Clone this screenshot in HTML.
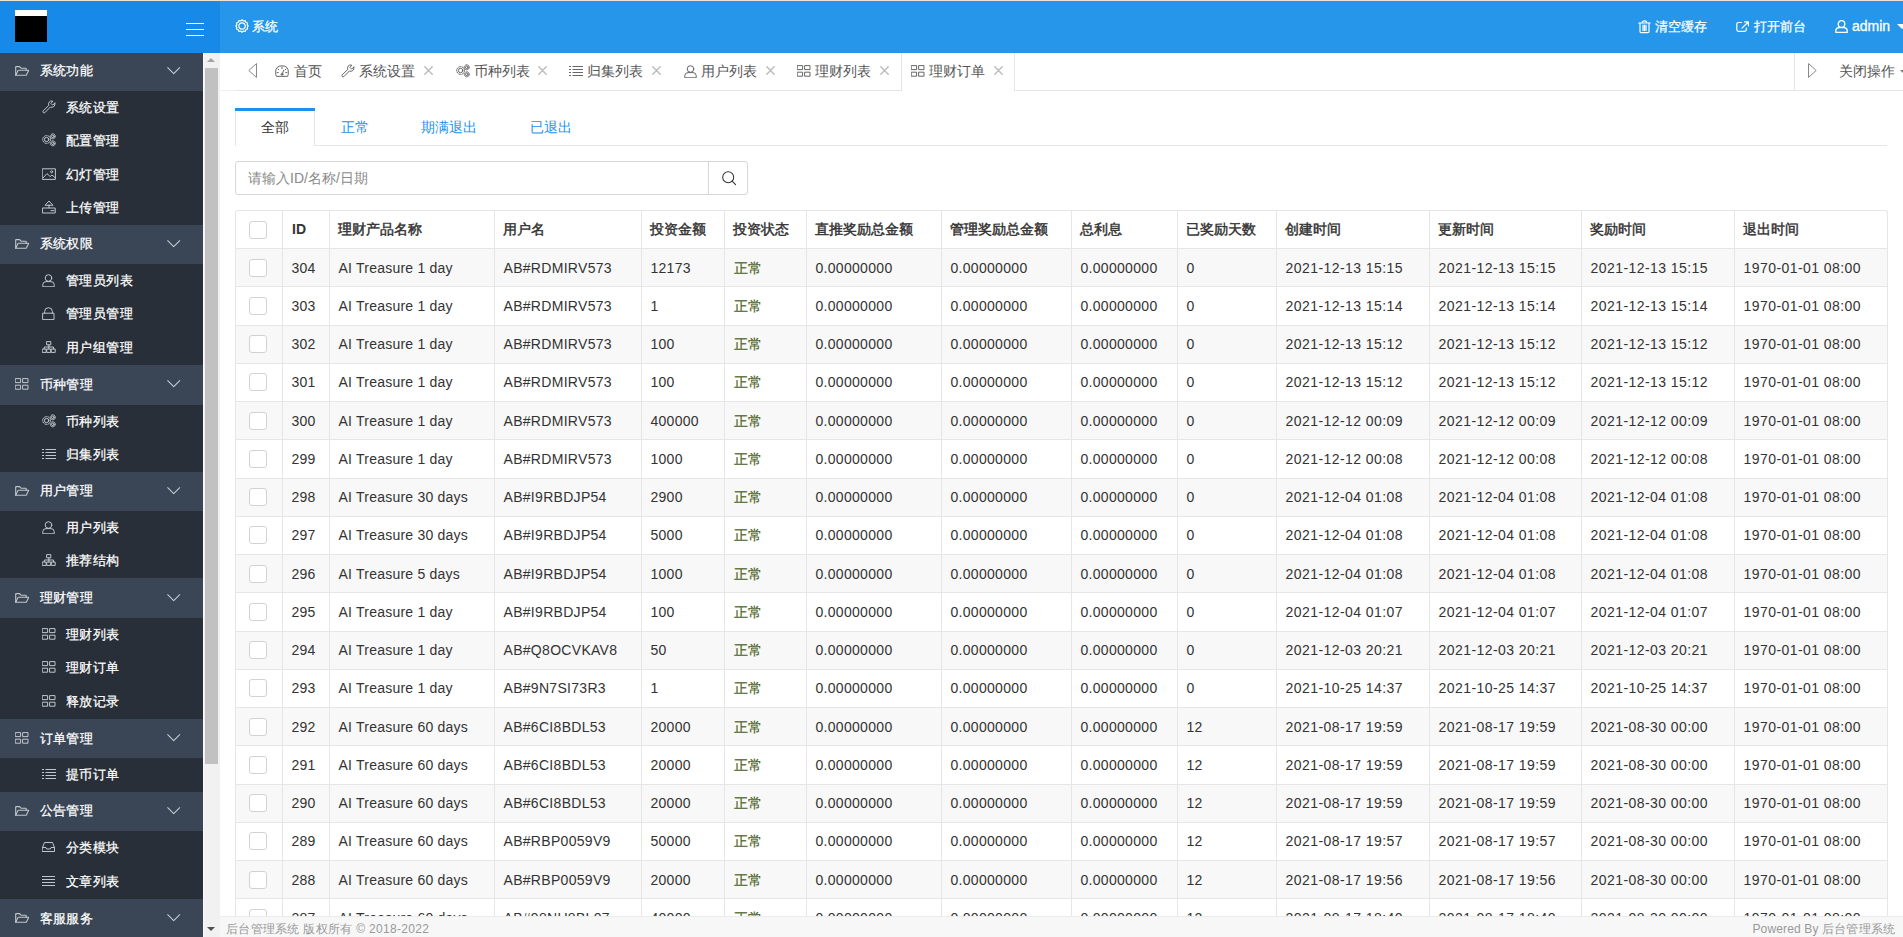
<!DOCTYPE html>
<html><head><meta charset="utf-8"><title>admin</title>
<style>
html,body{margin:0;padding:0;width:1903px;height:937px;overflow:hidden;background:#fff;font-family:"Liberation Sans", sans-serif;}
div{box-sizing:content-box}
</style></head><body>
<div style="position:relative;width:1903px;height:937px;overflow:hidden">
<div style="position:absolute;left:0px;top:0px;width:1903px;height:937px;background:#fff;"></div><div style="position:absolute;left:0px;top:0px;width:1903px;height:53px;background:#2596e9;"></div><div style="position:absolute;left:0px;top:0px;width:220px;height:53px;background:#178ae9;"></div><div style="position:absolute;left:0px;top:0px;width:1903px;height:1px;background:#ece2d8;"></div><div style="position:absolute;left:15px;top:10px;width:32px;height:32px;background:#000;"></div><div style="position:absolute;left:15px;top:10px;width:32px;height:6px;background:#fff;"></div><div style="position:absolute;left:186px;top:23px;width:18px;height:1.4px;background:#fff;"></div><div style="position:absolute;left:186px;top:29px;width:18px;height:1.4px;background:#fff;"></div><div style="position:absolute;left:186px;top:35px;width:18px;height:1.4px;background:#fff;"></div><svg style="position:absolute;left:235px;top:19px" width="14" height="14" viewBox="0 0 14 14" fill="none" stroke="#fff" stroke-width="1.2" stroke-linecap="round" stroke-linejoin="round" ><circle cx="7" cy="7" r="3.2"/><path d="M7 0.8 L8.4 2 L10.2 1.6 L10.8 3.3 L12.5 4 L12.2 5.8 L13.2 7 L12.2 8.3 L12.5 10 L10.8 10.7 L10.2 12.4 L8.4 12 L7 13.2 L5.6 12 L3.8 12.4 L3.2 10.7 L1.5 10 L1.8 8.3 L0.8 7 L1.8 5.8 L1.5 4 L3.2 3.3 L3.8 1.6 L5.6 2 Z"/></svg><div style="position:absolute;left:252px;top:18.5px;font-size:13px;line-height:15px;color:#fff;font-weight:normal;white-space:nowrap;-webkit-text-stroke:0.25px #fff">系统</div><svg style="position:absolute;left:1637.5px;top:20px" width="13" height="14" viewBox="0 0 13 14" fill="none" stroke="#fff" stroke-width="1.2" stroke-linecap="round" stroke-linejoin="round" ><path d="M0.8 3 H12.2 M4.2 3 Q4.2 0.8 6.5 0.8 Q8.8 0.8 8.8 3"/><path d="M2 3 V11.6 Q2 12.7 3.1 12.7 H9.9 Q11 12.7 11 11.6 V3"/><path d="M5 5.2 V10.6 M6.5 5.2 V10.6 M8 5.2 V10.6"/></svg><div style="position:absolute;left:1655px;top:18.5px;font-size:13px;line-height:15px;color:#fff;font-weight:normal;white-space:nowrap;-webkit-text-stroke:0.25px #fff">清空缓存</div><svg style="position:absolute;left:1736px;top:21px" width="14" height="12" viewBox="0 0 14 12" fill="none" stroke="#fff" stroke-width="1.2" stroke-linecap="round" stroke-linejoin="round" ><path d="M5.5 1.5 H2.5 Q0.8 1.5 0.8 3.2 V8.6 Q0.8 10.3 2.5 10.3 H8.6 Q10.3 10.3 10.3 8.6 V7"/><path d="M8.5 0.8 H12.4 V4.7 M12.2 1 L6 7.2"/></svg><div style="position:absolute;left:1754px;top:18.5px;font-size:13px;line-height:15px;color:#fff;font-weight:normal;white-space:nowrap;-webkit-text-stroke:0.25px #fff">打开前台</div><svg style="position:absolute;left:1835px;top:20px" width="13" height="13" viewBox="0 0 13 13" fill="none" stroke="#fff" stroke-width="1.3" stroke-linecap="round" stroke-linejoin="round" ><circle cx="6.5" cy="4" r="3.3"/><path d="M0.8 12.4 V10.6 Q0.8 7.8 4 7.6 H9 Q12.2 7.8 12.2 10.6 V12.4 Z"/></svg><div style="position:absolute;left:1852px;top:18px;font-size:14px;line-height:16px;color:#fff;font-weight:normal;white-space:nowrap;-webkit-text-stroke:0.3px #fff">admin</div><div style="position:absolute;left:1897px;top:24px;width:0;height:0;border-left:5px solid transparent;border-right:5px solid transparent;border-top:5px solid #fff"></div><div style="position:absolute;left:0px;top:53px;width:203px;height:884px;background:#282f38;"></div><div style="position:absolute;left:0px;top:53px;width:203px;height:38px;background:#3a4555;"></div><svg style="position:absolute;left:15px;top:65.5px" width="15" height="11" viewBox="0 0 15 11" fill="none" stroke="#c2c6cc" stroke-width="1.1" stroke-linecap="round" stroke-linejoin="round" ><path d="M0.7 9.3 V1.2 Q0.7 0.6 1.3 0.6 H4.6 L6 2.2 H10.6 Q11.2 2.2 11.2 2.8 V4.2"/><path d="M0.7 9.3 L3 4.6 Q3.2 4.2 3.7 4.2 H13.2 Q13.8 4.2 13.5 4.8 L11.4 9 Q11.2 9.3 10.8 9.3 Z"/></svg><div style="position:absolute;left:39.5px;top:63px;font-size:13px;line-height:15px;color:#fff;font-weight:normal;white-space:nowrap;letter-spacing:0.35px;-webkit-text-stroke:0.25px #fff">系统功能</div><svg style="position:absolute;left:167px;top:66.5px" width="14" height="8" viewBox="0 0 14 8" fill="none" stroke="#c8ccd2" stroke-width="1.05" stroke-linecap="round" stroke-linejoin="round" ><path d="M0.7 0.7 L6.7 6.7 L12.7 0.7"/></svg><svg style="position:absolute;left:42px;top:100px" width="14" height="14" viewBox="0 0 14 14" fill="none" stroke="#c2c6cc" stroke-width="1.0" stroke-linecap="round" stroke-linejoin="round" ><path d="M12.9 3.2 L10.6 5.1 L8.9 3.4 L10.9 1.2 Q8.3 0.3 7 2.3 Q6.1 3.8 6.8 5.4 L1.2 10.9 Q0.5 11.8 1.3 12.6 Q2.1 13.3 2.9 12.6 L8.4 7 Q10.2 7.7 11.7 6.7 Q13.5 5.3 12.9 3.2 Z"/></svg><div style="position:absolute;left:66px;top:99.55px;font-size:13px;line-height:15px;color:#fff;font-weight:normal;white-space:nowrap;letter-spacing:0.4px;-webkit-text-stroke:0.25px #fff">系统设置</div><svg style="position:absolute;left:42px;top:133px" width="14" height="14" viewBox="0 0 14 14" fill="none" stroke="#c2c6cc" stroke-width="1.0" stroke-linecap="round" stroke-linejoin="round" ><circle cx="4.6" cy="6.5" r="2.2"/><circle cx="4.6" cy="6.5" r="3.9" stroke-dasharray="1.6 1.2"/><circle cx="10.8" cy="3.3" r="1.3"/><circle cx="10.8" cy="3.3" r="2.5" stroke-dasharray="1.2 1"/><circle cx="10.8" cy="10.3" r="1.3"/><circle cx="10.8" cy="10.3" r="2.5" stroke-dasharray="1.2 1"/></svg><div style="position:absolute;left:66px;top:133.05px;font-size:13px;line-height:15px;color:#fff;font-weight:normal;white-space:nowrap;letter-spacing:0.4px;-webkit-text-stroke:0.25px #fff">配置管理</div><svg style="position:absolute;left:42px;top:168px" width="14" height="12" viewBox="0 0 14 12" fill="none" stroke="#c2c6cc" stroke-width="1.0" stroke-linecap="round" stroke-linejoin="round" ><rect x="0.6" y="0.8" width="12.8" height="10.6"/><path d="M1.2 9.8 L5 5.6 L8.2 8.6 L10 7 L13 9.6"/><circle cx="9.6" cy="3.8" r="1"/></svg><div style="position:absolute;left:66px;top:166.55px;font-size:13px;line-height:15px;color:#fff;font-weight:normal;white-space:nowrap;letter-spacing:0.4px;-webkit-text-stroke:0.25px #fff">幻灯管理</div><svg style="position:absolute;left:42px;top:200px" width="14" height="14" viewBox="0 0 14 14" fill="none" stroke="#c2c6cc" stroke-width="1.0" stroke-linecap="round" stroke-linejoin="round" ><path d="M3.3 5 L7 1 L10.7 5 Z"/><path d="M7 5 V8"/><path d="M0.8 8 H13.2 V13 H0.8 Z"/><path d="M9 10.6 H12"/></svg><div style="position:absolute;left:66px;top:200.05px;font-size:13px;line-height:15px;color:#fff;font-weight:normal;white-space:nowrap;letter-spacing:0.4px;-webkit-text-stroke:0.25px #fff">上传管理</div><div style="position:absolute;left:0px;top:225px;width:203px;height:39px;background:#3a4555;"></div><svg style="position:absolute;left:15px;top:238.5px" width="15" height="11" viewBox="0 0 15 11" fill="none" stroke="#c2c6cc" stroke-width="1.1" stroke-linecap="round" stroke-linejoin="round" ><path d="M0.7 9.3 V1.2 Q0.7 0.6 1.3 0.6 H4.6 L6 2.2 H10.6 Q11.2 2.2 11.2 2.8 V4.2"/><path d="M0.7 9.3 L3 4.6 Q3.2 4.2 3.7 4.2 H13.2 Q13.8 4.2 13.5 4.8 L11.4 9 Q11.2 9.3 10.8 9.3 Z"/></svg><div style="position:absolute;left:39.5px;top:236px;font-size:13px;line-height:15px;color:#fff;font-weight:normal;white-space:nowrap;letter-spacing:0.35px;-webkit-text-stroke:0.25px #fff">系统权限</div><svg style="position:absolute;left:167px;top:239.5px" width="14" height="8" viewBox="0 0 14 8" fill="none" stroke="#c8ccd2" stroke-width="1.05" stroke-linecap="round" stroke-linejoin="round" ><path d="M0.7 0.7 L6.7 6.7 L12.7 0.7"/></svg><svg style="position:absolute;left:42px;top:273.5px" width="13" height="13" viewBox="0 0 13 13" fill="none" stroke="#c2c6cc" stroke-width="1.0" stroke-linecap="round" stroke-linejoin="round" ><circle cx="6.5" cy="4" r="3.3"/><path d="M0.8 12.4 V10.6 Q0.8 7.8 4 7.6 H9 Q12.2 7.8 12.2 10.6 V12.4 Z"/></svg><div style="position:absolute;left:66px;top:272.6333333333333px;font-size:13px;line-height:15px;color:#fff;font-weight:normal;white-space:nowrap;letter-spacing:0.4px;-webkit-text-stroke:0.25px #fff">管理员列表</div><svg style="position:absolute;left:42px;top:306.5px" width="13" height="13" viewBox="0 0 13 13" fill="none" stroke="#c2c6cc" stroke-width="1.0" stroke-linecap="round" stroke-linejoin="round" ><path d="M2.6 6.2 V4.6 Q2.6 0.7 6.5 0.7 Q10.4 0.7 10.4 4.6 V6.2"/><rect x="1" y="6.2" width="11" height="6.4"/></svg><div style="position:absolute;left:66px;top:306.3px;font-size:13px;line-height:15px;color:#fff;font-weight:normal;white-space:nowrap;letter-spacing:0.4px;-webkit-text-stroke:0.25px #fff">管理员管理</div><svg style="position:absolute;left:42px;top:341px" width="14" height="12" viewBox="0 0 14 12" fill="none" stroke="#c2c6cc" stroke-width="1.0" stroke-linecap="round" stroke-linejoin="round" ><rect x="5" y="0.6" width="3.8" height="3.2"/><path d="M6.9 3.8 V6 M2.3 8 V6 H11.5 V8 M6.9 6 V8"/><rect x="0.6" y="8" width="3.6" height="3.4"/><rect x="5.1" y="8" width="3.6" height="3.4"/><rect x="9.6" y="8" width="3.6" height="3.4"/></svg><div style="position:absolute;left:66px;top:339.96666666666664px;font-size:13px;line-height:15px;color:#fff;font-weight:normal;white-space:nowrap;letter-spacing:0.4px;-webkit-text-stroke:0.25px #fff">用户组管理</div><div style="position:absolute;left:0px;top:365px;width:203px;height:40px;background:#3a4555;"></div><svg style="position:absolute;left:15px;top:378px" width="14" height="12" viewBox="0 0 14 12" fill="none" stroke="#c2c6cc" stroke-width="1.0" stroke-linecap="round" stroke-linejoin="round" ><rect x="0.6" y="0.6" width="5" height="4"/><rect x="8" y="0.6" width="5" height="4"/><rect x="0.6" y="7.2" width="5" height="4"/><rect x="8" y="7.2" width="5" height="4"/></svg><div style="position:absolute;left:39.5px;top:376.5px;font-size:13px;line-height:15px;color:#fff;font-weight:normal;white-space:nowrap;letter-spacing:0.35px;-webkit-text-stroke:0.25px #fff">币种管理</div><svg style="position:absolute;left:167px;top:379.5px" width="14" height="8" viewBox="0 0 14 8" fill="none" stroke="#c8ccd2" stroke-width="1.05" stroke-linecap="round" stroke-linejoin="round" ><path d="M0.7 0.7 L6.7 6.7 L12.7 0.7"/></svg><svg style="position:absolute;left:42px;top:414px" width="14" height="14" viewBox="0 0 14 14" fill="none" stroke="#c2c6cc" stroke-width="1.0" stroke-linecap="round" stroke-linejoin="round" ><circle cx="4.6" cy="6.5" r="2.2"/><circle cx="4.6" cy="6.5" r="3.9" stroke-dasharray="1.6 1.2"/><circle cx="10.8" cy="3.3" r="1.3"/><circle cx="10.8" cy="3.3" r="2.5" stroke-dasharray="1.2 1"/><circle cx="10.8" cy="10.3" r="1.3"/><circle cx="10.8" cy="10.3" r="2.5" stroke-dasharray="1.2 1"/></svg><div style="position:absolute;left:66px;top:413.55px;font-size:13px;line-height:15px;color:#fff;font-weight:normal;white-space:nowrap;letter-spacing:0.4px;-webkit-text-stroke:0.25px #fff">币种列表</div><svg style="position:absolute;left:42px;top:449px" width="14" height="10" viewBox="0 0 14 10" fill="none" stroke="#c2c6cc" stroke-width="1.0" stroke-linejoin="round" stroke-linecap="butt"><path d="M0 0.5 H2 M0 3.5 H2 M0 6.5 H2 M0 9.5 H2 M3.5 0.5 H14 M3.5 3.5 H14 M3.5 6.5 H14 M3.5 9.5 H14"/></svg><div style="position:absolute;left:66px;top:447.05px;font-size:13px;line-height:15px;color:#fff;font-weight:normal;white-space:nowrap;letter-spacing:0.4px;-webkit-text-stroke:0.25px #fff">归集列表</div><div style="position:absolute;left:0px;top:472px;width:203px;height:39px;background:#3a4555;"></div><svg style="position:absolute;left:15px;top:485.5px" width="15" height="11" viewBox="0 0 15 11" fill="none" stroke="#c2c6cc" stroke-width="1.1" stroke-linecap="round" stroke-linejoin="round" ><path d="M0.7 9.3 V1.2 Q0.7 0.6 1.3 0.6 H4.6 L6 2.2 H10.6 Q11.2 2.2 11.2 2.8 V4.2"/><path d="M0.7 9.3 L3 4.6 Q3.2 4.2 3.7 4.2 H13.2 Q13.8 4.2 13.5 4.8 L11.4 9 Q11.2 9.3 10.8 9.3 Z"/></svg><div style="position:absolute;left:39.5px;top:483px;font-size:13px;line-height:15px;color:#fff;font-weight:normal;white-space:nowrap;letter-spacing:0.35px;-webkit-text-stroke:0.25px #fff">用户管理</div><svg style="position:absolute;left:167px;top:486.5px" width="14" height="8" viewBox="0 0 14 8" fill="none" stroke="#c8ccd2" stroke-width="1.05" stroke-linecap="round" stroke-linejoin="round" ><path d="M0.7 0.7 L6.7 6.7 L12.7 0.7"/></svg><svg style="position:absolute;left:42px;top:520.5px" width="13" height="13" viewBox="0 0 13 13" fill="none" stroke="#c2c6cc" stroke-width="1.0" stroke-linecap="round" stroke-linejoin="round" ><circle cx="6.5" cy="4" r="3.3"/><path d="M0.8 12.4 V10.6 Q0.8 7.8 4 7.6 H9 Q12.2 7.8 12.2 10.6 V12.4 Z"/></svg><div style="position:absolute;left:66px;top:519.55px;font-size:13px;line-height:15px;color:#fff;font-weight:normal;white-space:nowrap;letter-spacing:0.4px;-webkit-text-stroke:0.25px #fff">用户列表</div><svg style="position:absolute;left:42px;top:554px" width="14" height="12" viewBox="0 0 14 12" fill="none" stroke="#c2c6cc" stroke-width="1.0" stroke-linecap="round" stroke-linejoin="round" ><rect x="5" y="0.6" width="3.8" height="3.2"/><path d="M6.9 3.8 V6 M2.3 8 V6 H11.5 V8 M6.9 6 V8"/><rect x="0.6" y="8" width="3.6" height="3.4"/><rect x="5.1" y="8" width="3.6" height="3.4"/><rect x="9.6" y="8" width="3.6" height="3.4"/></svg><div style="position:absolute;left:66px;top:553.05px;font-size:13px;line-height:15px;color:#fff;font-weight:normal;white-space:nowrap;letter-spacing:0.4px;-webkit-text-stroke:0.25px #fff">推荐结构</div><div style="position:absolute;left:0px;top:578px;width:203px;height:40px;background:#3a4555;"></div><svg style="position:absolute;left:15px;top:592.5px" width="15" height="11" viewBox="0 0 15 11" fill="none" stroke="#c2c6cc" stroke-width="1.1" stroke-linecap="round" stroke-linejoin="round" ><path d="M0.7 9.3 V1.2 Q0.7 0.6 1.3 0.6 H4.6 L6 2.2 H10.6 Q11.2 2.2 11.2 2.8 V4.2"/><path d="M0.7 9.3 L3 4.6 Q3.2 4.2 3.7 4.2 H13.2 Q13.8 4.2 13.5 4.8 L11.4 9 Q11.2 9.3 10.8 9.3 Z"/></svg><div style="position:absolute;left:39.5px;top:589.5px;font-size:13px;line-height:15px;color:#fff;font-weight:normal;white-space:nowrap;letter-spacing:0.35px;-webkit-text-stroke:0.25px #fff">理财管理</div><svg style="position:absolute;left:167px;top:593.5px" width="14" height="8" viewBox="0 0 14 8" fill="none" stroke="#c8ccd2" stroke-width="1.05" stroke-linecap="round" stroke-linejoin="round" ><path d="M0.7 0.7 L6.7 6.7 L12.7 0.7"/></svg><svg style="position:absolute;left:42px;top:628px" width="14" height="12" viewBox="0 0 14 12" fill="none" stroke="#c2c6cc" stroke-width="1.0" stroke-linecap="round" stroke-linejoin="round" ><rect x="0.6" y="0.6" width="5" height="4"/><rect x="8" y="0.6" width="5" height="4"/><rect x="0.6" y="7.2" width="5" height="4"/><rect x="8" y="7.2" width="5" height="4"/></svg><div style="position:absolute;left:66px;top:626.6333333333333px;font-size:13px;line-height:15px;color:#fff;font-weight:normal;white-space:nowrap;letter-spacing:0.4px;-webkit-text-stroke:0.25px #fff">理财列表</div><svg style="position:absolute;left:42px;top:661px" width="14" height="12" viewBox="0 0 14 12" fill="none" stroke="#c2c6cc" stroke-width="1.0" stroke-linecap="round" stroke-linejoin="round" ><rect x="0.6" y="0.6" width="5" height="4"/><rect x="8" y="0.6" width="5" height="4"/><rect x="0.6" y="7.2" width="5" height="4"/><rect x="8" y="7.2" width="5" height="4"/></svg><div style="position:absolute;left:66px;top:660.3px;font-size:13px;line-height:15px;color:#fff;font-weight:normal;white-space:nowrap;letter-spacing:0.4px;-webkit-text-stroke:0.25px #fff">理财订单</div><svg style="position:absolute;left:42px;top:695px" width="14" height="12" viewBox="0 0 14 12" fill="none" stroke="#c2c6cc" stroke-width="1.0" stroke-linecap="round" stroke-linejoin="round" ><rect x="0.6" y="0.6" width="5" height="4"/><rect x="8" y="0.6" width="5" height="4"/><rect x="0.6" y="7.2" width="5" height="4"/><rect x="8" y="7.2" width="5" height="4"/></svg><div style="position:absolute;left:66px;top:693.9666666666667px;font-size:13px;line-height:15px;color:#fff;font-weight:normal;white-space:nowrap;letter-spacing:0.4px;-webkit-text-stroke:0.25px #fff">释放记录</div><div style="position:absolute;left:0px;top:719px;width:203px;height:39px;background:#3a4555;"></div><svg style="position:absolute;left:15px;top:732px" width="14" height="12" viewBox="0 0 14 12" fill="none" stroke="#c2c6cc" stroke-width="1.0" stroke-linecap="round" stroke-linejoin="round" ><rect x="0.6" y="0.6" width="5" height="4"/><rect x="8" y="0.6" width="5" height="4"/><rect x="0.6" y="7.2" width="5" height="4"/><rect x="8" y="7.2" width="5" height="4"/></svg><div style="position:absolute;left:39.5px;top:730.5px;font-size:13px;line-height:15px;color:#fff;font-weight:normal;white-space:nowrap;letter-spacing:0.35px;-webkit-text-stroke:0.25px #fff">订单管理</div><svg style="position:absolute;left:167px;top:733.5px" width="14" height="8" viewBox="0 0 14 8" fill="none" stroke="#c8ccd2" stroke-width="1.05" stroke-linecap="round" stroke-linejoin="round" ><path d="M0.7 0.7 L6.7 6.7 L12.7 0.7"/></svg><svg style="position:absolute;left:42px;top:769px" width="14" height="10" viewBox="0 0 14 10" fill="none" stroke="#c2c6cc" stroke-width="1.0" stroke-linejoin="round" stroke-linecap="butt"><path d="M0 0.5 H2 M0 3.5 H2 M0 6.5 H2 M0 9.5 H2 M3.5 0.5 H14 M3.5 3.5 H14 M3.5 6.5 H14 M3.5 9.5 H14"/></svg><div style="position:absolute;left:66px;top:766.8px;font-size:13px;line-height:15px;color:#fff;font-weight:normal;white-space:nowrap;letter-spacing:0.4px;-webkit-text-stroke:0.25px #fff">提币订单</div><div style="position:absolute;left:0px;top:792px;width:203px;height:39px;background:#3a4555;"></div><svg style="position:absolute;left:15px;top:805.5px" width="15" height="11" viewBox="0 0 15 11" fill="none" stroke="#c2c6cc" stroke-width="1.1" stroke-linecap="round" stroke-linejoin="round" ><path d="M0.7 9.3 V1.2 Q0.7 0.6 1.3 0.6 H4.6 L6 2.2 H10.6 Q11.2 2.2 11.2 2.8 V4.2"/><path d="M0.7 9.3 L3 4.6 Q3.2 4.2 3.7 4.2 H13.2 Q13.8 4.2 13.5 4.8 L11.4 9 Q11.2 9.3 10.8 9.3 Z"/></svg><div style="position:absolute;left:39.5px;top:803px;font-size:13px;line-height:15px;color:#fff;font-weight:normal;white-space:nowrap;letter-spacing:0.35px;-webkit-text-stroke:0.25px #fff">公告管理</div><svg style="position:absolute;left:167px;top:806.5px" width="14" height="8" viewBox="0 0 14 8" fill="none" stroke="#c8ccd2" stroke-width="1.05" stroke-linecap="round" stroke-linejoin="round" ><path d="M0.7 0.7 L6.7 6.7 L12.7 0.7"/></svg><svg style="position:absolute;left:42px;top:842px" width="13" height="10" viewBox="0 0 13 10" fill="none" stroke="#c2c6cc" stroke-width="1.0" stroke-linecap="round" stroke-linejoin="round" ><path d="M0.5 5.5 L2.5 0.5 H10.5 L12.5 5.5 V9.5 H0.5 Z"/><path d="M0.5 5.5 H4 L4.6 7 H8.4 L9 5.5 H12.5"/></svg><div style="position:absolute;left:66px;top:839.8px;font-size:13px;line-height:15px;color:#fff;font-weight:normal;white-space:nowrap;letter-spacing:0.4px;-webkit-text-stroke:0.25px #fff">分类模块</div><svg style="position:absolute;left:42px;top:876px" width="13" height="10" viewBox="0 0 13 10" fill="none" stroke="#c2c6cc" stroke-width="1.0" stroke-linecap="round" stroke-linejoin="round" ><path d="M0 0.5 H13 M0 3.5 H13 M0 6.5 H13 M0 9.5 H13"/></svg><div style="position:absolute;left:66px;top:873.8px;font-size:13px;line-height:15px;color:#fff;font-weight:normal;white-space:nowrap;letter-spacing:0.4px;-webkit-text-stroke:0.25px #fff">文章列表</div><div style="position:absolute;left:0px;top:899px;width:203px;height:39.5px;background:#3a4555;"></div><svg style="position:absolute;left:15px;top:912.5px" width="15" height="11" viewBox="0 0 15 11" fill="none" stroke="#c2c6cc" stroke-width="1.1" stroke-linecap="round" stroke-linejoin="round" ><path d="M0.7 9.3 V1.2 Q0.7 0.6 1.3 0.6 H4.6 L6 2.2 H10.6 Q11.2 2.2 11.2 2.8 V4.2"/><path d="M0.7 9.3 L3 4.6 Q3.2 4.2 3.7 4.2 H13.2 Q13.8 4.2 13.5 4.8 L11.4 9 Q11.2 9.3 10.8 9.3 Z"/></svg><div style="position:absolute;left:39.5px;top:910.5px;font-size:13px;line-height:15px;color:#fff;font-weight:normal;white-space:nowrap;letter-spacing:0.35px;-webkit-text-stroke:0.25px #fff">客服服务</div><svg style="position:absolute;left:167px;top:913.5px" width="14" height="8" viewBox="0 0 14 8" fill="none" stroke="#c8ccd2" stroke-width="1.05" stroke-linecap="round" stroke-linejoin="round" ><path d="M0.7 0.7 L6.7 6.7 L12.7 0.7"/></svg><div style="position:absolute;left:203px;top:53px;width:17px;height:884px;background:#f1f1f1;"></div><div style="position:absolute;left:203px;top:53px;width:1px;height:884px;background:#fafafa;"></div><div style="position:absolute;left:205px;top:68px;width:13px;height:696px;background:#c1c1c1;"></div><div style="position:absolute;left:207px;top:58px;width:0;height:0;border-left:4px solid transparent;border-right:4px solid transparent;border-bottom:4px solid #a3a3a3"></div><div style="position:absolute;left:207px;top:927px;width:0;height:0;border-left:4px solid transparent;border-right:4px solid transparent;border-top:4px solid #505050"></div><div style="position:absolute;left:220px;top:90px;width:1683px;height:1px;background:#e6e6e6;"></div><div style="position:absolute;left:220px;top:90px;width:15px;height:1px;background:#f0f0f0;"></div><svg style="position:absolute;left:247.5px;top:63px" width="9" height="15" viewBox="0 0 9 15" fill="none" stroke="#888" stroke-width="1.0" stroke-linecap="round" stroke-linejoin="round" ><path d="M8.2 0.8 L0.8 7.5 L8.2 14.2 Z"/></svg><div style="position:absolute;left:901px;top:53px;width:114px;height:38px;background:#fff;box-sizing:border-box;border-left:1px solid #e6e6e6;border-right:1px solid #e6e6e6"></div><svg style="position:absolute;left:275px;top:65px" width="14" height="12" viewBox="0 0 14 12" fill="none" stroke="#666" stroke-width="1.0" stroke-linecap="round" stroke-linejoin="round" ><path d="M1.2 11 Q0.6 9.5 0.6 7.3 Q0.6 0.8 7 0.8 Q13.4 0.8 13.4 7.3 Q13.4 9.5 12.8 11 Z"/><path d="M7 2.2 V3.6 M3 4 L3.8 4.8 M11 4 L10.2 4.8 M2 7.6 H3.3 M10.7 7.6 H12 M7 9.6 L8.8 5.2"/><circle cx="7" cy="9.3" r="1"/></svg><div style="position:absolute;left:294px;top:63px;font-size:14px;line-height:16px;color:#555;font-weight:normal;white-space:nowrap;">首页</div><svg style="position:absolute;left:341px;top:64px" width="14" height="14" viewBox="0 0 14 14" fill="none" stroke="#666" stroke-width="1.0" stroke-linecap="round" stroke-linejoin="round" ><path d="M12.9 3.2 L10.6 5.1 L8.9 3.4 L10.9 1.2 Q8.3 0.3 7 2.3 Q6.1 3.8 6.8 5.4 L1.2 10.9 Q0.5 11.8 1.3 12.6 Q2.1 13.3 2.9 12.6 L8.4 7 Q10.2 7.7 11.7 6.7 Q13.5 5.3 12.9 3.2 Z"/></svg><div style="position:absolute;left:359px;top:63px;font-size:14px;line-height:16px;color:#555;font-weight:normal;white-space:nowrap;">系统设置</div><svg style="position:absolute;left:424px;top:66px" width="9" height="9" viewBox="0 0 9 9" fill="none" stroke="#bdbdbd" stroke-width="1.5" stroke-linecap="round" stroke-linejoin="round" ><path d="M0.8 0.8 L8.2 8.2 M8.2 0.8 L0.8 8.2"/></svg><svg style="position:absolute;left:456px;top:64px" width="14" height="14" viewBox="0 0 14 14" fill="none" stroke="#666" stroke-width="1.0" stroke-linecap="round" stroke-linejoin="round" ><circle cx="4.6" cy="6.5" r="2.2"/><circle cx="4.6" cy="6.5" r="3.9" stroke-dasharray="1.6 1.2"/><circle cx="10.8" cy="3.3" r="1.3"/><circle cx="10.8" cy="3.3" r="2.5" stroke-dasharray="1.2 1"/><circle cx="10.8" cy="10.3" r="1.3"/><circle cx="10.8" cy="10.3" r="2.5" stroke-dasharray="1.2 1"/></svg><div style="position:absolute;left:474px;top:63px;font-size:14px;line-height:16px;color:#555;font-weight:normal;white-space:nowrap;">币种列表</div><svg style="position:absolute;left:538px;top:66px" width="9" height="9" viewBox="0 0 9 9" fill="none" stroke="#bdbdbd" stroke-width="1.5" stroke-linecap="round" stroke-linejoin="round" ><path d="M0.8 0.8 L8.2 8.2 M8.2 0.8 L0.8 8.2"/></svg><svg style="position:absolute;left:569px;top:66px" width="14" height="10" viewBox="0 0 14 10" fill="none" stroke="#666" stroke-width="1.0" stroke-linejoin="round" stroke-linecap="butt"><path d="M0 0.5 H2 M0 3.5 H2 M0 6.5 H2 M0 9.5 H2 M3.5 0.5 H14 M3.5 3.5 H14 M3.5 6.5 H14 M3.5 9.5 H14"/></svg><div style="position:absolute;left:587px;top:63px;font-size:14px;line-height:16px;color:#555;font-weight:normal;white-space:nowrap;">归集列表</div><svg style="position:absolute;left:652px;top:66px" width="9" height="9" viewBox="0 0 9 9" fill="none" stroke="#bdbdbd" stroke-width="1.5" stroke-linecap="round" stroke-linejoin="round" ><path d="M0.8 0.8 L8.2 8.2 M8.2 0.8 L0.8 8.2"/></svg><svg style="position:absolute;left:684px;top:64.5px" width="13" height="13" viewBox="0 0 13 13" fill="none" stroke="#666" stroke-width="1.0" stroke-linecap="round" stroke-linejoin="round" ><circle cx="6.5" cy="4" r="3.3"/><path d="M0.8 12.4 V10.6 Q0.8 7.8 4 7.6 H9 Q12.2 7.8 12.2 10.6 V12.4 Z"/></svg><div style="position:absolute;left:701px;top:63px;font-size:14px;line-height:16px;color:#555;font-weight:normal;white-space:nowrap;">用户列表</div><svg style="position:absolute;left:766px;top:66px" width="9" height="9" viewBox="0 0 9 9" fill="none" stroke="#bdbdbd" stroke-width="1.5" stroke-linecap="round" stroke-linejoin="round" ><path d="M0.8 0.8 L8.2 8.2 M8.2 0.8 L0.8 8.2"/></svg><svg style="position:absolute;left:797px;top:65px" width="14" height="12" viewBox="0 0 14 12" fill="none" stroke="#666" stroke-width="1.0" stroke-linecap="round" stroke-linejoin="round" ><rect x="0.6" y="0.6" width="5" height="4"/><rect x="8" y="0.6" width="5" height="4"/><rect x="0.6" y="7.2" width="5" height="4"/><rect x="8" y="7.2" width="5" height="4"/></svg><div style="position:absolute;left:815px;top:63px;font-size:14px;line-height:16px;color:#555;font-weight:normal;white-space:nowrap;">理财列表</div><svg style="position:absolute;left:880px;top:66px" width="9" height="9" viewBox="0 0 9 9" fill="none" stroke="#bdbdbd" stroke-width="1.5" stroke-linecap="round" stroke-linejoin="round" ><path d="M0.8 0.8 L8.2 8.2 M8.2 0.8 L0.8 8.2"/></svg><svg style="position:absolute;left:911px;top:65px" width="14" height="12" viewBox="0 0 14 12" fill="none" stroke="#666" stroke-width="1.0" stroke-linecap="round" stroke-linejoin="round" ><rect x="0.6" y="0.6" width="5" height="4"/><rect x="8" y="0.6" width="5" height="4"/><rect x="0.6" y="7.2" width="5" height="4"/><rect x="8" y="7.2" width="5" height="4"/></svg><div style="position:absolute;left:929px;top:63px;font-size:14px;line-height:16px;color:#555;font-weight:normal;white-space:nowrap;">理财订单</div><svg style="position:absolute;left:994px;top:66px" width="9" height="9" viewBox="0 0 9 9" fill="none" stroke="#bdbdbd" stroke-width="1.5" stroke-linecap="round" stroke-linejoin="round" ><path d="M0.8 0.8 L8.2 8.2 M8.2 0.8 L0.8 8.2"/></svg><div style="position:absolute;left:1794px;top:53px;width:1px;height:37px;background:#e6e6e6;"></div><svg style="position:absolute;left:1807.5px;top:63px" width="9" height="15" viewBox="0 0 9 15" fill="none" stroke="#888" stroke-width="1.0" stroke-linecap="round" stroke-linejoin="round" ><path d="M0.8 0.8 L8.2 7.5 L0.8 14.2 Z"/></svg><div style="position:absolute;left:1839px;top:63px;font-size:14px;line-height:16px;color:#555;font-weight:normal;white-space:nowrap;">关闭操作</div><div style="position:absolute;left:1900px;top:70px;width:0;height:0;border-left:4px solid transparent;border-right:4px solid transparent;border-top:4px solid #777"></div><div style="position:absolute;left:235px;top:145px;width:1652px;height:1px;background:#e6e6e6;"></div><div style="position:absolute;left:235px;top:108px;width:80px;height:38px;background:#fff;box-sizing:border-box;border-left:1px solid #e6e6e6;border-right:1px solid #e6e6e6"></div><div style="position:absolute;left:235px;top:108px;width:80px;height:3px;background:#1e90ee;"></div><div style="position:absolute;left:261px;top:119px;font-size:14px;line-height:16px;color:#333;font-weight:normal;white-space:nowrap;">全部</div><div style="position:absolute;left:341px;top:119px;font-size:14px;line-height:16px;color:#1e90ee;font-weight:normal;white-space:nowrap;">正常</div><div style="position:absolute;left:421px;top:119px;font-size:14px;line-height:16px;color:#1e90ee;font-weight:normal;white-space:nowrap;">期满退出</div><div style="position:absolute;left:530px;top:119px;font-size:14px;line-height:16px;color:#1e90ee;font-weight:normal;white-space:nowrap;">已退出</div><div style="position:absolute;left:235px;top:161px;width:513px;height:34px;box-sizing:border-box;border:1px solid #d6d6d6;border-radius:3px;background:#fff"></div><div style="position:absolute;left:708px;top:162px;width:1px;height:32px;background:#d6d6d6;"></div><div style="position:absolute;left:248px;top:170px;font-size:14px;line-height:16px;color:#8a8a8a;font-weight:normal;white-space:nowrap;">请输入ID/名称/日期</div><svg style="position:absolute;left:721.5px;top:170.5px" width="15" height="15" viewBox="0 0 15 15" fill="none" stroke="#333" stroke-width="1.05" stroke-linecap="round" stroke-linejoin="round" ><circle cx="6.2" cy="6.2" r="5.5"/><path d="M10.2 10.2 L13.6 13.6"/></svg><div style="position:absolute;left:0;top:0;width:1903px;height:916px;overflow:hidden"><div style="position:absolute;left:235px;top:249px;width:1652px;height:37px;background:#f8f8f8;"></div><div style="position:absolute;left:235px;top:326px;width:1652px;height:37px;background:#f8f8f8;"></div><div style="position:absolute;left:235px;top:402px;width:1652px;height:37px;background:#f8f8f8;"></div><div style="position:absolute;left:235px;top:479px;width:1652px;height:37px;background:#f8f8f8;"></div><div style="position:absolute;left:235px;top:555px;width:1652px;height:37px;background:#f8f8f8;"></div><div style="position:absolute;left:235px;top:632px;width:1652px;height:37px;background:#f8f8f8;"></div><div style="position:absolute;left:235px;top:708px;width:1652px;height:37px;background:#f8f8f8;"></div><div style="position:absolute;left:235px;top:785px;width:1652px;height:37px;background:#f8f8f8;"></div><div style="position:absolute;left:235px;top:861px;width:1652px;height:37px;background:#f8f8f8;"></div><div style="position:absolute;left:238px;top:210px;width:1646px;height:1px;background:#e6e6e6;"></div><div style="position:absolute;left:235px;top:248px;width:1652px;height:1px;background:#e6e6e6;"></div><div style="position:absolute;left:235px;top:286px;width:1652px;height:1px;background:#e6e6e6;"></div><div style="position:absolute;left:235px;top:325px;width:1652px;height:1px;background:#e6e6e6;"></div><div style="position:absolute;left:235px;top:363px;width:1652px;height:1px;background:#e6e6e6;"></div><div style="position:absolute;left:235px;top:401px;width:1652px;height:1px;background:#e6e6e6;"></div><div style="position:absolute;left:235px;top:439px;width:1652px;height:1px;background:#e6e6e6;"></div><div style="position:absolute;left:235px;top:478px;width:1652px;height:1px;background:#e6e6e6;"></div><div style="position:absolute;left:235px;top:516px;width:1652px;height:1px;background:#e6e6e6;"></div><div style="position:absolute;left:235px;top:554px;width:1652px;height:1px;background:#e6e6e6;"></div><div style="position:absolute;left:235px;top:592px;width:1652px;height:1px;background:#e6e6e6;"></div><div style="position:absolute;left:235px;top:631px;width:1652px;height:1px;background:#e6e6e6;"></div><div style="position:absolute;left:235px;top:669px;width:1652px;height:1px;background:#e6e6e6;"></div><div style="position:absolute;left:235px;top:707px;width:1652px;height:1px;background:#e6e6e6;"></div><div style="position:absolute;left:235px;top:745px;width:1652px;height:1px;background:#e6e6e6;"></div><div style="position:absolute;left:235px;top:784px;width:1652px;height:1px;background:#e6e6e6;"></div><div style="position:absolute;left:235px;top:822px;width:1652px;height:1px;background:#e6e6e6;"></div><div style="position:absolute;left:235px;top:860px;width:1652px;height:1px;background:#e6e6e6;"></div><div style="position:absolute;left:235px;top:898px;width:1652px;height:1px;background:#e6e6e6;"></div><div style="position:absolute;left:235px;top:937px;width:1652px;height:1px;background:#e6e6e6;"></div><div style="position:absolute;left:235px;top:215px;width:1px;height:706px;background:#e6e6e6"></div><div style="position:absolute;left:282px;top:211px;width:1px;height:706px;background:#e6e6e6"></div><div style="position:absolute;left:329px;top:211px;width:1px;height:706px;background:#e6e6e6"></div><div style="position:absolute;left:494px;top:211px;width:1px;height:706px;background:#e6e6e6"></div><div style="position:absolute;left:641px;top:211px;width:1px;height:706px;background:#e6e6e6"></div><div style="position:absolute;left:724px;top:211px;width:1px;height:706px;background:#e6e6e6"></div><div style="position:absolute;left:806px;top:211px;width:1px;height:706px;background:#e6e6e6"></div><div style="position:absolute;left:941px;top:211px;width:1px;height:706px;background:#e6e6e6"></div><div style="position:absolute;left:1071px;top:211px;width:1px;height:706px;background:#e6e6e6"></div><div style="position:absolute;left:1177px;top:211px;width:1px;height:706px;background:#e6e6e6"></div><div style="position:absolute;left:1276px;top:211px;width:1px;height:706px;background:#e6e6e6"></div><div style="position:absolute;left:1429px;top:211px;width:1px;height:706px;background:#e6e6e6"></div><div style="position:absolute;left:1581px;top:211px;width:1px;height:706px;background:#e6e6e6"></div><div style="position:absolute;left:1734px;top:211px;width:1px;height:706px;background:#e6e6e6"></div><div style="position:absolute;left:1887px;top:215px;width:1px;height:706px;background:#e6e6e6"></div><div style="position:absolute;left:235px;top:210px;width:1653px;height:10px;box-sizing:border-box;border:1px solid #e6e6e6;border-bottom:none;border-radius:3px 3px 0 0"></div><div style="position:absolute;left:292px;top:221px;font-size:14px;line-height:16px;color:#333;font-weight:bold;white-space:nowrap;">ID</div><div style="position:absolute;left:338.2px;top:221px;font-size:14px;line-height:16px;color:#333;font-weight:normal;white-space:nowrap;-webkit-text-stroke:0.45px #333">理财产品名称</div><div style="position:absolute;left:503.2px;top:221px;font-size:14px;line-height:16px;color:#333;font-weight:normal;white-space:nowrap;-webkit-text-stroke:0.45px #333">用户名</div><div style="position:absolute;left:650.2px;top:221px;font-size:14px;line-height:16px;color:#333;font-weight:normal;white-space:nowrap;-webkit-text-stroke:0.45px #333">投资金额</div><div style="position:absolute;left:733.2px;top:221px;font-size:14px;line-height:16px;color:#333;font-weight:normal;white-space:nowrap;-webkit-text-stroke:0.45px #333">投资状态</div><div style="position:absolute;left:815.2px;top:221px;font-size:14px;line-height:16px;color:#333;font-weight:normal;white-space:nowrap;-webkit-text-stroke:0.45px #333">直推奖励总金额</div><div style="position:absolute;left:950.2px;top:221px;font-size:14px;line-height:16px;color:#333;font-weight:normal;white-space:nowrap;-webkit-text-stroke:0.45px #333">管理奖励总金额</div><div style="position:absolute;left:1080.2px;top:221px;font-size:14px;line-height:16px;color:#333;font-weight:normal;white-space:nowrap;-webkit-text-stroke:0.45px #333">总利息</div><div style="position:absolute;left:1186.2px;top:221px;font-size:14px;line-height:16px;color:#333;font-weight:normal;white-space:nowrap;-webkit-text-stroke:0.45px #333">已奖励天数</div><div style="position:absolute;left:1285.2px;top:221px;font-size:14px;line-height:16px;color:#333;font-weight:normal;white-space:nowrap;-webkit-text-stroke:0.45px #333">创建时间</div><div style="position:absolute;left:1438.2px;top:221px;font-size:14px;line-height:16px;color:#333;font-weight:normal;white-space:nowrap;-webkit-text-stroke:0.45px #333">更新时间</div><div style="position:absolute;left:1590.2px;top:221px;font-size:14px;line-height:16px;color:#333;font-weight:normal;white-space:nowrap;-webkit-text-stroke:0.45px #333">奖励时间</div><div style="position:absolute;left:1743.2px;top:221px;font-size:14px;line-height:16px;color:#333;font-weight:normal;white-space:nowrap;-webkit-text-stroke:0.45px #333">退出时间</div><div style="position:absolute;left:249px;top:221px;width:18px;height:18px;box-sizing:border-box;border:1px solid #d2d2d2;border-radius:3px;background:#fff"></div><div style="position:absolute;left:249px;top:259px;width:18px;height:18px;box-sizing:border-box;border:1px solid #d2d2d2;border-radius:3px;background:#fff"></div><div style="position:absolute;left:291.5px;top:260px;font-size:14px;line-height:16px;color:#333;font-weight:normal;white-space:nowrap;letter-spacing:0.26px">304</div><div style="position:absolute;left:338.5px;top:260px;font-size:14px;line-height:16px;color:#333;font-weight:normal;white-space:nowrap;letter-spacing:0.22px">AI Treasure 1 day</div><div style="position:absolute;left:503.5px;top:260px;font-size:14px;line-height:16px;color:#333;font-weight:normal;white-space:nowrap;letter-spacing:0.3px">AB#RDMIRV573</div><div style="position:absolute;left:650.5px;top:260px;font-size:14px;line-height:16px;color:#333;font-weight:normal;white-space:nowrap;letter-spacing:0.26px">12173</div><div style="position:absolute;left:733.5px;top:260px;font-size:14px;line-height:16px;color:#4e6628;font-weight:normal;white-space:nowrap;letter-spacing:0px;-webkit-text-stroke:0.2px #4e6628">正常</div><div style="position:absolute;left:815.5px;top:260px;font-size:14px;line-height:16px;color:#333;font-weight:normal;white-space:nowrap;letter-spacing:0.3px">0.00000000</div><div style="position:absolute;left:950.5px;top:260px;font-size:14px;line-height:16px;color:#333;font-weight:normal;white-space:nowrap;letter-spacing:0.3px">0.00000000</div><div style="position:absolute;left:1080.5px;top:260px;font-size:14px;line-height:16px;color:#333;font-weight:normal;white-space:nowrap;letter-spacing:0.3px">0.00000000</div><div style="position:absolute;left:1186.5px;top:260px;font-size:14px;line-height:16px;color:#333;font-weight:normal;white-space:nowrap;letter-spacing:0.26px">0</div><div style="position:absolute;left:1285.5px;top:260px;font-size:14px;line-height:16px;color:#333;font-weight:normal;white-space:nowrap;letter-spacing:0.44px">2021-12-13 15:15</div><div style="position:absolute;left:1438.5px;top:260px;font-size:14px;line-height:16px;color:#333;font-weight:normal;white-space:nowrap;letter-spacing:0.44px">2021-12-13 15:15</div><div style="position:absolute;left:1590.5px;top:260px;font-size:14px;line-height:16px;color:#333;font-weight:normal;white-space:nowrap;letter-spacing:0.44px">2021-12-13 15:15</div><div style="position:absolute;left:1743.5px;top:260px;font-size:14px;line-height:16px;color:#333;font-weight:normal;white-space:nowrap;letter-spacing:0.44px">1970-01-01 08:00</div><div style="position:absolute;left:249px;top:297px;width:18px;height:18px;box-sizing:border-box;border:1px solid #d2d2d2;border-radius:3px;background:#fff"></div><div style="position:absolute;left:291.5px;top:298px;font-size:14px;line-height:16px;color:#333;font-weight:normal;white-space:nowrap;letter-spacing:0.26px">303</div><div style="position:absolute;left:338.5px;top:298px;font-size:14px;line-height:16px;color:#333;font-weight:normal;white-space:nowrap;letter-spacing:0.22px">AI Treasure 1 day</div><div style="position:absolute;left:503.5px;top:298px;font-size:14px;line-height:16px;color:#333;font-weight:normal;white-space:nowrap;letter-spacing:0.3px">AB#RDMIRV573</div><div style="position:absolute;left:650.5px;top:298px;font-size:14px;line-height:16px;color:#333;font-weight:normal;white-space:nowrap;letter-spacing:0.26px">1</div><div style="position:absolute;left:733.5px;top:298px;font-size:14px;line-height:16px;color:#4e6628;font-weight:normal;white-space:nowrap;letter-spacing:0px;-webkit-text-stroke:0.2px #4e6628">正常</div><div style="position:absolute;left:815.5px;top:298px;font-size:14px;line-height:16px;color:#333;font-weight:normal;white-space:nowrap;letter-spacing:0.3px">0.00000000</div><div style="position:absolute;left:950.5px;top:298px;font-size:14px;line-height:16px;color:#333;font-weight:normal;white-space:nowrap;letter-spacing:0.3px">0.00000000</div><div style="position:absolute;left:1080.5px;top:298px;font-size:14px;line-height:16px;color:#333;font-weight:normal;white-space:nowrap;letter-spacing:0.3px">0.00000000</div><div style="position:absolute;left:1186.5px;top:298px;font-size:14px;line-height:16px;color:#333;font-weight:normal;white-space:nowrap;letter-spacing:0.26px">0</div><div style="position:absolute;left:1285.5px;top:298px;font-size:14px;line-height:16px;color:#333;font-weight:normal;white-space:nowrap;letter-spacing:0.44px">2021-12-13 15:14</div><div style="position:absolute;left:1438.5px;top:298px;font-size:14px;line-height:16px;color:#333;font-weight:normal;white-space:nowrap;letter-spacing:0.44px">2021-12-13 15:14</div><div style="position:absolute;left:1590.5px;top:298px;font-size:14px;line-height:16px;color:#333;font-weight:normal;white-space:nowrap;letter-spacing:0.44px">2021-12-13 15:14</div><div style="position:absolute;left:1743.5px;top:298px;font-size:14px;line-height:16px;color:#333;font-weight:normal;white-space:nowrap;letter-spacing:0.44px">1970-01-01 08:00</div><div style="position:absolute;left:249px;top:335px;width:18px;height:18px;box-sizing:border-box;border:1px solid #d2d2d2;border-radius:3px;background:#fff"></div><div style="position:absolute;left:291.5px;top:336px;font-size:14px;line-height:16px;color:#333;font-weight:normal;white-space:nowrap;letter-spacing:0.26px">302</div><div style="position:absolute;left:338.5px;top:336px;font-size:14px;line-height:16px;color:#333;font-weight:normal;white-space:nowrap;letter-spacing:0.22px">AI Treasure 1 day</div><div style="position:absolute;left:503.5px;top:336px;font-size:14px;line-height:16px;color:#333;font-weight:normal;white-space:nowrap;letter-spacing:0.3px">AB#RDMIRV573</div><div style="position:absolute;left:650.5px;top:336px;font-size:14px;line-height:16px;color:#333;font-weight:normal;white-space:nowrap;letter-spacing:0.26px">100</div><div style="position:absolute;left:733.5px;top:336px;font-size:14px;line-height:16px;color:#4e6628;font-weight:normal;white-space:nowrap;letter-spacing:0px;-webkit-text-stroke:0.2px #4e6628">正常</div><div style="position:absolute;left:815.5px;top:336px;font-size:14px;line-height:16px;color:#333;font-weight:normal;white-space:nowrap;letter-spacing:0.3px">0.00000000</div><div style="position:absolute;left:950.5px;top:336px;font-size:14px;line-height:16px;color:#333;font-weight:normal;white-space:nowrap;letter-spacing:0.3px">0.00000000</div><div style="position:absolute;left:1080.5px;top:336px;font-size:14px;line-height:16px;color:#333;font-weight:normal;white-space:nowrap;letter-spacing:0.3px">0.00000000</div><div style="position:absolute;left:1186.5px;top:336px;font-size:14px;line-height:16px;color:#333;font-weight:normal;white-space:nowrap;letter-spacing:0.26px">0</div><div style="position:absolute;left:1285.5px;top:336px;font-size:14px;line-height:16px;color:#333;font-weight:normal;white-space:nowrap;letter-spacing:0.44px">2021-12-13 15:12</div><div style="position:absolute;left:1438.5px;top:336px;font-size:14px;line-height:16px;color:#333;font-weight:normal;white-space:nowrap;letter-spacing:0.44px">2021-12-13 15:12</div><div style="position:absolute;left:1590.5px;top:336px;font-size:14px;line-height:16px;color:#333;font-weight:normal;white-space:nowrap;letter-spacing:0.44px">2021-12-13 15:12</div><div style="position:absolute;left:1743.5px;top:336px;font-size:14px;line-height:16px;color:#333;font-weight:normal;white-space:nowrap;letter-spacing:0.44px">1970-01-01 08:00</div><div style="position:absolute;left:249px;top:373px;width:18px;height:18px;box-sizing:border-box;border:1px solid #d2d2d2;border-radius:3px;background:#fff"></div><div style="position:absolute;left:291.5px;top:374px;font-size:14px;line-height:16px;color:#333;font-weight:normal;white-space:nowrap;letter-spacing:0.26px">301</div><div style="position:absolute;left:338.5px;top:374px;font-size:14px;line-height:16px;color:#333;font-weight:normal;white-space:nowrap;letter-spacing:0.22px">AI Treasure 1 day</div><div style="position:absolute;left:503.5px;top:374px;font-size:14px;line-height:16px;color:#333;font-weight:normal;white-space:nowrap;letter-spacing:0.3px">AB#RDMIRV573</div><div style="position:absolute;left:650.5px;top:374px;font-size:14px;line-height:16px;color:#333;font-weight:normal;white-space:nowrap;letter-spacing:0.26px">100</div><div style="position:absolute;left:733.5px;top:374px;font-size:14px;line-height:16px;color:#4e6628;font-weight:normal;white-space:nowrap;letter-spacing:0px;-webkit-text-stroke:0.2px #4e6628">正常</div><div style="position:absolute;left:815.5px;top:374px;font-size:14px;line-height:16px;color:#333;font-weight:normal;white-space:nowrap;letter-spacing:0.3px">0.00000000</div><div style="position:absolute;left:950.5px;top:374px;font-size:14px;line-height:16px;color:#333;font-weight:normal;white-space:nowrap;letter-spacing:0.3px">0.00000000</div><div style="position:absolute;left:1080.5px;top:374px;font-size:14px;line-height:16px;color:#333;font-weight:normal;white-space:nowrap;letter-spacing:0.3px">0.00000000</div><div style="position:absolute;left:1186.5px;top:374px;font-size:14px;line-height:16px;color:#333;font-weight:normal;white-space:nowrap;letter-spacing:0.26px">0</div><div style="position:absolute;left:1285.5px;top:374px;font-size:14px;line-height:16px;color:#333;font-weight:normal;white-space:nowrap;letter-spacing:0.44px">2021-12-13 15:12</div><div style="position:absolute;left:1438.5px;top:374px;font-size:14px;line-height:16px;color:#333;font-weight:normal;white-space:nowrap;letter-spacing:0.44px">2021-12-13 15:12</div><div style="position:absolute;left:1590.5px;top:374px;font-size:14px;line-height:16px;color:#333;font-weight:normal;white-space:nowrap;letter-spacing:0.44px">2021-12-13 15:12</div><div style="position:absolute;left:1743.5px;top:374px;font-size:14px;line-height:16px;color:#333;font-weight:normal;white-space:nowrap;letter-spacing:0.44px">1970-01-01 08:00</div><div style="position:absolute;left:249px;top:412px;width:18px;height:18px;box-sizing:border-box;border:1px solid #d2d2d2;border-radius:3px;background:#fff"></div><div style="position:absolute;left:291.5px;top:413px;font-size:14px;line-height:16px;color:#333;font-weight:normal;white-space:nowrap;letter-spacing:0.26px">300</div><div style="position:absolute;left:338.5px;top:413px;font-size:14px;line-height:16px;color:#333;font-weight:normal;white-space:nowrap;letter-spacing:0.22px">AI Treasure 1 day</div><div style="position:absolute;left:503.5px;top:413px;font-size:14px;line-height:16px;color:#333;font-weight:normal;white-space:nowrap;letter-spacing:0.3px">AB#RDMIRV573</div><div style="position:absolute;left:650.5px;top:413px;font-size:14px;line-height:16px;color:#333;font-weight:normal;white-space:nowrap;letter-spacing:0.26px">400000</div><div style="position:absolute;left:733.5px;top:413px;font-size:14px;line-height:16px;color:#4e6628;font-weight:normal;white-space:nowrap;letter-spacing:0px;-webkit-text-stroke:0.2px #4e6628">正常</div><div style="position:absolute;left:815.5px;top:413px;font-size:14px;line-height:16px;color:#333;font-weight:normal;white-space:nowrap;letter-spacing:0.3px">0.00000000</div><div style="position:absolute;left:950.5px;top:413px;font-size:14px;line-height:16px;color:#333;font-weight:normal;white-space:nowrap;letter-spacing:0.3px">0.00000000</div><div style="position:absolute;left:1080.5px;top:413px;font-size:14px;line-height:16px;color:#333;font-weight:normal;white-space:nowrap;letter-spacing:0.3px">0.00000000</div><div style="position:absolute;left:1186.5px;top:413px;font-size:14px;line-height:16px;color:#333;font-weight:normal;white-space:nowrap;letter-spacing:0.26px">0</div><div style="position:absolute;left:1285.5px;top:413px;font-size:14px;line-height:16px;color:#333;font-weight:normal;white-space:nowrap;letter-spacing:0.44px">2021-12-12 00:09</div><div style="position:absolute;left:1438.5px;top:413px;font-size:14px;line-height:16px;color:#333;font-weight:normal;white-space:nowrap;letter-spacing:0.44px">2021-12-12 00:09</div><div style="position:absolute;left:1590.5px;top:413px;font-size:14px;line-height:16px;color:#333;font-weight:normal;white-space:nowrap;letter-spacing:0.44px">2021-12-12 00:09</div><div style="position:absolute;left:1743.5px;top:413px;font-size:14px;line-height:16px;color:#333;font-weight:normal;white-space:nowrap;letter-spacing:0.44px">1970-01-01 08:00</div><div style="position:absolute;left:249px;top:450px;width:18px;height:18px;box-sizing:border-box;border:1px solid #d2d2d2;border-radius:3px;background:#fff"></div><div style="position:absolute;left:291.5px;top:451px;font-size:14px;line-height:16px;color:#333;font-weight:normal;white-space:nowrap;letter-spacing:0.26px">299</div><div style="position:absolute;left:338.5px;top:451px;font-size:14px;line-height:16px;color:#333;font-weight:normal;white-space:nowrap;letter-spacing:0.22px">AI Treasure 1 day</div><div style="position:absolute;left:503.5px;top:451px;font-size:14px;line-height:16px;color:#333;font-weight:normal;white-space:nowrap;letter-spacing:0.3px">AB#RDMIRV573</div><div style="position:absolute;left:650.5px;top:451px;font-size:14px;line-height:16px;color:#333;font-weight:normal;white-space:nowrap;letter-spacing:0.26px">1000</div><div style="position:absolute;left:733.5px;top:451px;font-size:14px;line-height:16px;color:#4e6628;font-weight:normal;white-space:nowrap;letter-spacing:0px;-webkit-text-stroke:0.2px #4e6628">正常</div><div style="position:absolute;left:815.5px;top:451px;font-size:14px;line-height:16px;color:#333;font-weight:normal;white-space:nowrap;letter-spacing:0.3px">0.00000000</div><div style="position:absolute;left:950.5px;top:451px;font-size:14px;line-height:16px;color:#333;font-weight:normal;white-space:nowrap;letter-spacing:0.3px">0.00000000</div><div style="position:absolute;left:1080.5px;top:451px;font-size:14px;line-height:16px;color:#333;font-weight:normal;white-space:nowrap;letter-spacing:0.3px">0.00000000</div><div style="position:absolute;left:1186.5px;top:451px;font-size:14px;line-height:16px;color:#333;font-weight:normal;white-space:nowrap;letter-spacing:0.26px">0</div><div style="position:absolute;left:1285.5px;top:451px;font-size:14px;line-height:16px;color:#333;font-weight:normal;white-space:nowrap;letter-spacing:0.44px">2021-12-12 00:08</div><div style="position:absolute;left:1438.5px;top:451px;font-size:14px;line-height:16px;color:#333;font-weight:normal;white-space:nowrap;letter-spacing:0.44px">2021-12-12 00:08</div><div style="position:absolute;left:1590.5px;top:451px;font-size:14px;line-height:16px;color:#333;font-weight:normal;white-space:nowrap;letter-spacing:0.44px">2021-12-12 00:08</div><div style="position:absolute;left:1743.5px;top:451px;font-size:14px;line-height:16px;color:#333;font-weight:normal;white-space:nowrap;letter-spacing:0.44px">1970-01-01 08:00</div><div style="position:absolute;left:249px;top:488px;width:18px;height:18px;box-sizing:border-box;border:1px solid #d2d2d2;border-radius:3px;background:#fff"></div><div style="position:absolute;left:291.5px;top:489px;font-size:14px;line-height:16px;color:#333;font-weight:normal;white-space:nowrap;letter-spacing:0.26px">298</div><div style="position:absolute;left:338.5px;top:489px;font-size:14px;line-height:16px;color:#333;font-weight:normal;white-space:nowrap;letter-spacing:0.22px">AI Treasure 30 days</div><div style="position:absolute;left:503.5px;top:489px;font-size:14px;line-height:16px;color:#333;font-weight:normal;white-space:nowrap;letter-spacing:0.3px">AB#I9RBDJP54</div><div style="position:absolute;left:650.5px;top:489px;font-size:14px;line-height:16px;color:#333;font-weight:normal;white-space:nowrap;letter-spacing:0.26px">2900</div><div style="position:absolute;left:733.5px;top:489px;font-size:14px;line-height:16px;color:#4e6628;font-weight:normal;white-space:nowrap;letter-spacing:0px;-webkit-text-stroke:0.2px #4e6628">正常</div><div style="position:absolute;left:815.5px;top:489px;font-size:14px;line-height:16px;color:#333;font-weight:normal;white-space:nowrap;letter-spacing:0.3px">0.00000000</div><div style="position:absolute;left:950.5px;top:489px;font-size:14px;line-height:16px;color:#333;font-weight:normal;white-space:nowrap;letter-spacing:0.3px">0.00000000</div><div style="position:absolute;left:1080.5px;top:489px;font-size:14px;line-height:16px;color:#333;font-weight:normal;white-space:nowrap;letter-spacing:0.3px">0.00000000</div><div style="position:absolute;left:1186.5px;top:489px;font-size:14px;line-height:16px;color:#333;font-weight:normal;white-space:nowrap;letter-spacing:0.26px">0</div><div style="position:absolute;left:1285.5px;top:489px;font-size:14px;line-height:16px;color:#333;font-weight:normal;white-space:nowrap;letter-spacing:0.44px">2021-12-04 01:08</div><div style="position:absolute;left:1438.5px;top:489px;font-size:14px;line-height:16px;color:#333;font-weight:normal;white-space:nowrap;letter-spacing:0.44px">2021-12-04 01:08</div><div style="position:absolute;left:1590.5px;top:489px;font-size:14px;line-height:16px;color:#333;font-weight:normal;white-space:nowrap;letter-spacing:0.44px">2021-12-04 01:08</div><div style="position:absolute;left:1743.5px;top:489px;font-size:14px;line-height:16px;color:#333;font-weight:normal;white-space:nowrap;letter-spacing:0.44px">1970-01-01 08:00</div><div style="position:absolute;left:249px;top:526px;width:18px;height:18px;box-sizing:border-box;border:1px solid #d2d2d2;border-radius:3px;background:#fff"></div><div style="position:absolute;left:291.5px;top:527px;font-size:14px;line-height:16px;color:#333;font-weight:normal;white-space:nowrap;letter-spacing:0.26px">297</div><div style="position:absolute;left:338.5px;top:527px;font-size:14px;line-height:16px;color:#333;font-weight:normal;white-space:nowrap;letter-spacing:0.22px">AI Treasure 30 days</div><div style="position:absolute;left:503.5px;top:527px;font-size:14px;line-height:16px;color:#333;font-weight:normal;white-space:nowrap;letter-spacing:0.3px">AB#I9RBDJP54</div><div style="position:absolute;left:650.5px;top:527px;font-size:14px;line-height:16px;color:#333;font-weight:normal;white-space:nowrap;letter-spacing:0.26px">5000</div><div style="position:absolute;left:733.5px;top:527px;font-size:14px;line-height:16px;color:#4e6628;font-weight:normal;white-space:nowrap;letter-spacing:0px;-webkit-text-stroke:0.2px #4e6628">正常</div><div style="position:absolute;left:815.5px;top:527px;font-size:14px;line-height:16px;color:#333;font-weight:normal;white-space:nowrap;letter-spacing:0.3px">0.00000000</div><div style="position:absolute;left:950.5px;top:527px;font-size:14px;line-height:16px;color:#333;font-weight:normal;white-space:nowrap;letter-spacing:0.3px">0.00000000</div><div style="position:absolute;left:1080.5px;top:527px;font-size:14px;line-height:16px;color:#333;font-weight:normal;white-space:nowrap;letter-spacing:0.3px">0.00000000</div><div style="position:absolute;left:1186.5px;top:527px;font-size:14px;line-height:16px;color:#333;font-weight:normal;white-space:nowrap;letter-spacing:0.26px">0</div><div style="position:absolute;left:1285.5px;top:527px;font-size:14px;line-height:16px;color:#333;font-weight:normal;white-space:nowrap;letter-spacing:0.44px">2021-12-04 01:08</div><div style="position:absolute;left:1438.5px;top:527px;font-size:14px;line-height:16px;color:#333;font-weight:normal;white-space:nowrap;letter-spacing:0.44px">2021-12-04 01:08</div><div style="position:absolute;left:1590.5px;top:527px;font-size:14px;line-height:16px;color:#333;font-weight:normal;white-space:nowrap;letter-spacing:0.44px">2021-12-04 01:08</div><div style="position:absolute;left:1743.5px;top:527px;font-size:14px;line-height:16px;color:#333;font-weight:normal;white-space:nowrap;letter-spacing:0.44px">1970-01-01 08:00</div><div style="position:absolute;left:249px;top:565px;width:18px;height:18px;box-sizing:border-box;border:1px solid #d2d2d2;border-radius:3px;background:#fff"></div><div style="position:absolute;left:291.5px;top:566px;font-size:14px;line-height:16px;color:#333;font-weight:normal;white-space:nowrap;letter-spacing:0.26px">296</div><div style="position:absolute;left:338.5px;top:566px;font-size:14px;line-height:16px;color:#333;font-weight:normal;white-space:nowrap;letter-spacing:0.22px">AI Treasure 5 days</div><div style="position:absolute;left:503.5px;top:566px;font-size:14px;line-height:16px;color:#333;font-weight:normal;white-space:nowrap;letter-spacing:0.3px">AB#I9RBDJP54</div><div style="position:absolute;left:650.5px;top:566px;font-size:14px;line-height:16px;color:#333;font-weight:normal;white-space:nowrap;letter-spacing:0.26px">1000</div><div style="position:absolute;left:733.5px;top:566px;font-size:14px;line-height:16px;color:#4e6628;font-weight:normal;white-space:nowrap;letter-spacing:0px;-webkit-text-stroke:0.2px #4e6628">正常</div><div style="position:absolute;left:815.5px;top:566px;font-size:14px;line-height:16px;color:#333;font-weight:normal;white-space:nowrap;letter-spacing:0.3px">0.00000000</div><div style="position:absolute;left:950.5px;top:566px;font-size:14px;line-height:16px;color:#333;font-weight:normal;white-space:nowrap;letter-spacing:0.3px">0.00000000</div><div style="position:absolute;left:1080.5px;top:566px;font-size:14px;line-height:16px;color:#333;font-weight:normal;white-space:nowrap;letter-spacing:0.3px">0.00000000</div><div style="position:absolute;left:1186.5px;top:566px;font-size:14px;line-height:16px;color:#333;font-weight:normal;white-space:nowrap;letter-spacing:0.26px">0</div><div style="position:absolute;left:1285.5px;top:566px;font-size:14px;line-height:16px;color:#333;font-weight:normal;white-space:nowrap;letter-spacing:0.44px">2021-12-04 01:08</div><div style="position:absolute;left:1438.5px;top:566px;font-size:14px;line-height:16px;color:#333;font-weight:normal;white-space:nowrap;letter-spacing:0.44px">2021-12-04 01:08</div><div style="position:absolute;left:1590.5px;top:566px;font-size:14px;line-height:16px;color:#333;font-weight:normal;white-space:nowrap;letter-spacing:0.44px">2021-12-04 01:08</div><div style="position:absolute;left:1743.5px;top:566px;font-size:14px;line-height:16px;color:#333;font-weight:normal;white-space:nowrap;letter-spacing:0.44px">1970-01-01 08:00</div><div style="position:absolute;left:249px;top:603px;width:18px;height:18px;box-sizing:border-box;border:1px solid #d2d2d2;border-radius:3px;background:#fff"></div><div style="position:absolute;left:291.5px;top:604px;font-size:14px;line-height:16px;color:#333;font-weight:normal;white-space:nowrap;letter-spacing:0.26px">295</div><div style="position:absolute;left:338.5px;top:604px;font-size:14px;line-height:16px;color:#333;font-weight:normal;white-space:nowrap;letter-spacing:0.22px">AI Treasure 1 day</div><div style="position:absolute;left:503.5px;top:604px;font-size:14px;line-height:16px;color:#333;font-weight:normal;white-space:nowrap;letter-spacing:0.3px">AB#I9RBDJP54</div><div style="position:absolute;left:650.5px;top:604px;font-size:14px;line-height:16px;color:#333;font-weight:normal;white-space:nowrap;letter-spacing:0.26px">100</div><div style="position:absolute;left:733.5px;top:604px;font-size:14px;line-height:16px;color:#4e6628;font-weight:normal;white-space:nowrap;letter-spacing:0px;-webkit-text-stroke:0.2px #4e6628">正常</div><div style="position:absolute;left:815.5px;top:604px;font-size:14px;line-height:16px;color:#333;font-weight:normal;white-space:nowrap;letter-spacing:0.3px">0.00000000</div><div style="position:absolute;left:950.5px;top:604px;font-size:14px;line-height:16px;color:#333;font-weight:normal;white-space:nowrap;letter-spacing:0.3px">0.00000000</div><div style="position:absolute;left:1080.5px;top:604px;font-size:14px;line-height:16px;color:#333;font-weight:normal;white-space:nowrap;letter-spacing:0.3px">0.00000000</div><div style="position:absolute;left:1186.5px;top:604px;font-size:14px;line-height:16px;color:#333;font-weight:normal;white-space:nowrap;letter-spacing:0.26px">0</div><div style="position:absolute;left:1285.5px;top:604px;font-size:14px;line-height:16px;color:#333;font-weight:normal;white-space:nowrap;letter-spacing:0.44px">2021-12-04 01:07</div><div style="position:absolute;left:1438.5px;top:604px;font-size:14px;line-height:16px;color:#333;font-weight:normal;white-space:nowrap;letter-spacing:0.44px">2021-12-04 01:07</div><div style="position:absolute;left:1590.5px;top:604px;font-size:14px;line-height:16px;color:#333;font-weight:normal;white-space:nowrap;letter-spacing:0.44px">2021-12-04 01:07</div><div style="position:absolute;left:1743.5px;top:604px;font-size:14px;line-height:16px;color:#333;font-weight:normal;white-space:nowrap;letter-spacing:0.44px">1970-01-01 08:00</div><div style="position:absolute;left:249px;top:641px;width:18px;height:18px;box-sizing:border-box;border:1px solid #d2d2d2;border-radius:3px;background:#fff"></div><div style="position:absolute;left:291.5px;top:642px;font-size:14px;line-height:16px;color:#333;font-weight:normal;white-space:nowrap;letter-spacing:0.26px">294</div><div style="position:absolute;left:338.5px;top:642px;font-size:14px;line-height:16px;color:#333;font-weight:normal;white-space:nowrap;letter-spacing:0.22px">AI Treasure 1 day</div><div style="position:absolute;left:503.5px;top:642px;font-size:14px;line-height:16px;color:#333;font-weight:normal;white-space:nowrap;letter-spacing:0.3px">AB#Q8OCVKAV8</div><div style="position:absolute;left:650.5px;top:642px;font-size:14px;line-height:16px;color:#333;font-weight:normal;white-space:nowrap;letter-spacing:0.26px">50</div><div style="position:absolute;left:733.5px;top:642px;font-size:14px;line-height:16px;color:#4e6628;font-weight:normal;white-space:nowrap;letter-spacing:0px;-webkit-text-stroke:0.2px #4e6628">正常</div><div style="position:absolute;left:815.5px;top:642px;font-size:14px;line-height:16px;color:#333;font-weight:normal;white-space:nowrap;letter-spacing:0.3px">0.00000000</div><div style="position:absolute;left:950.5px;top:642px;font-size:14px;line-height:16px;color:#333;font-weight:normal;white-space:nowrap;letter-spacing:0.3px">0.00000000</div><div style="position:absolute;left:1080.5px;top:642px;font-size:14px;line-height:16px;color:#333;font-weight:normal;white-space:nowrap;letter-spacing:0.3px">0.00000000</div><div style="position:absolute;left:1186.5px;top:642px;font-size:14px;line-height:16px;color:#333;font-weight:normal;white-space:nowrap;letter-spacing:0.26px">0</div><div style="position:absolute;left:1285.5px;top:642px;font-size:14px;line-height:16px;color:#333;font-weight:normal;white-space:nowrap;letter-spacing:0.44px">2021-12-03 20:21</div><div style="position:absolute;left:1438.5px;top:642px;font-size:14px;line-height:16px;color:#333;font-weight:normal;white-space:nowrap;letter-spacing:0.44px">2021-12-03 20:21</div><div style="position:absolute;left:1590.5px;top:642px;font-size:14px;line-height:16px;color:#333;font-weight:normal;white-space:nowrap;letter-spacing:0.44px">2021-12-03 20:21</div><div style="position:absolute;left:1743.5px;top:642px;font-size:14px;line-height:16px;color:#333;font-weight:normal;white-space:nowrap;letter-spacing:0.44px">1970-01-01 08:00</div><div style="position:absolute;left:249px;top:679px;width:18px;height:18px;box-sizing:border-box;border:1px solid #d2d2d2;border-radius:3px;background:#fff"></div><div style="position:absolute;left:291.5px;top:680px;font-size:14px;line-height:16px;color:#333;font-weight:normal;white-space:nowrap;letter-spacing:0.26px">293</div><div style="position:absolute;left:338.5px;top:680px;font-size:14px;line-height:16px;color:#333;font-weight:normal;white-space:nowrap;letter-spacing:0.22px">AI Treasure 1 day</div><div style="position:absolute;left:503.5px;top:680px;font-size:14px;line-height:16px;color:#333;font-weight:normal;white-space:nowrap;letter-spacing:0.3px">AB#9N7SI73R3</div><div style="position:absolute;left:650.5px;top:680px;font-size:14px;line-height:16px;color:#333;font-weight:normal;white-space:nowrap;letter-spacing:0.26px">1</div><div style="position:absolute;left:733.5px;top:680px;font-size:14px;line-height:16px;color:#4e6628;font-weight:normal;white-space:nowrap;letter-spacing:0px;-webkit-text-stroke:0.2px #4e6628">正常</div><div style="position:absolute;left:815.5px;top:680px;font-size:14px;line-height:16px;color:#333;font-weight:normal;white-space:nowrap;letter-spacing:0.3px">0.00000000</div><div style="position:absolute;left:950.5px;top:680px;font-size:14px;line-height:16px;color:#333;font-weight:normal;white-space:nowrap;letter-spacing:0.3px">0.00000000</div><div style="position:absolute;left:1080.5px;top:680px;font-size:14px;line-height:16px;color:#333;font-weight:normal;white-space:nowrap;letter-spacing:0.3px">0.00000000</div><div style="position:absolute;left:1186.5px;top:680px;font-size:14px;line-height:16px;color:#333;font-weight:normal;white-space:nowrap;letter-spacing:0.26px">0</div><div style="position:absolute;left:1285.5px;top:680px;font-size:14px;line-height:16px;color:#333;font-weight:normal;white-space:nowrap;letter-spacing:0.44px">2021-10-25 14:37</div><div style="position:absolute;left:1438.5px;top:680px;font-size:14px;line-height:16px;color:#333;font-weight:normal;white-space:nowrap;letter-spacing:0.44px">2021-10-25 14:37</div><div style="position:absolute;left:1590.5px;top:680px;font-size:14px;line-height:16px;color:#333;font-weight:normal;white-space:nowrap;letter-spacing:0.44px">2021-10-25 14:37</div><div style="position:absolute;left:1743.5px;top:680px;font-size:14px;line-height:16px;color:#333;font-weight:normal;white-space:nowrap;letter-spacing:0.44px">1970-01-01 08:00</div><div style="position:absolute;left:249px;top:718px;width:18px;height:18px;box-sizing:border-box;border:1px solid #d2d2d2;border-radius:3px;background:#fff"></div><div style="position:absolute;left:291.5px;top:719px;font-size:14px;line-height:16px;color:#333;font-weight:normal;white-space:nowrap;letter-spacing:0.26px">292</div><div style="position:absolute;left:338.5px;top:719px;font-size:14px;line-height:16px;color:#333;font-weight:normal;white-space:nowrap;letter-spacing:0.22px">AI Treasure 60 days</div><div style="position:absolute;left:503.5px;top:719px;font-size:14px;line-height:16px;color:#333;font-weight:normal;white-space:nowrap;letter-spacing:0.3px">AB#6CI8BDL53</div><div style="position:absolute;left:650.5px;top:719px;font-size:14px;line-height:16px;color:#333;font-weight:normal;white-space:nowrap;letter-spacing:0.26px">20000</div><div style="position:absolute;left:733.5px;top:719px;font-size:14px;line-height:16px;color:#4e6628;font-weight:normal;white-space:nowrap;letter-spacing:0px;-webkit-text-stroke:0.2px #4e6628">正常</div><div style="position:absolute;left:815.5px;top:719px;font-size:14px;line-height:16px;color:#333;font-weight:normal;white-space:nowrap;letter-spacing:0.3px">0.00000000</div><div style="position:absolute;left:950.5px;top:719px;font-size:14px;line-height:16px;color:#333;font-weight:normal;white-space:nowrap;letter-spacing:0.3px">0.00000000</div><div style="position:absolute;left:1080.5px;top:719px;font-size:14px;line-height:16px;color:#333;font-weight:normal;white-space:nowrap;letter-spacing:0.3px">0.00000000</div><div style="position:absolute;left:1186.5px;top:719px;font-size:14px;line-height:16px;color:#333;font-weight:normal;white-space:nowrap;letter-spacing:0.26px">12</div><div style="position:absolute;left:1285.5px;top:719px;font-size:14px;line-height:16px;color:#333;font-weight:normal;white-space:nowrap;letter-spacing:0.44px">2021-08-17 19:59</div><div style="position:absolute;left:1438.5px;top:719px;font-size:14px;line-height:16px;color:#333;font-weight:normal;white-space:nowrap;letter-spacing:0.44px">2021-08-17 19:59</div><div style="position:absolute;left:1590.5px;top:719px;font-size:14px;line-height:16px;color:#333;font-weight:normal;white-space:nowrap;letter-spacing:0.44px">2021-08-30 00:00</div><div style="position:absolute;left:1743.5px;top:719px;font-size:14px;line-height:16px;color:#333;font-weight:normal;white-space:nowrap;letter-spacing:0.44px">1970-01-01 08:00</div><div style="position:absolute;left:249px;top:756px;width:18px;height:18px;box-sizing:border-box;border:1px solid #d2d2d2;border-radius:3px;background:#fff"></div><div style="position:absolute;left:291.5px;top:757px;font-size:14px;line-height:16px;color:#333;font-weight:normal;white-space:nowrap;letter-spacing:0.26px">291</div><div style="position:absolute;left:338.5px;top:757px;font-size:14px;line-height:16px;color:#333;font-weight:normal;white-space:nowrap;letter-spacing:0.22px">AI Treasure 60 days</div><div style="position:absolute;left:503.5px;top:757px;font-size:14px;line-height:16px;color:#333;font-weight:normal;white-space:nowrap;letter-spacing:0.3px">AB#6CI8BDL53</div><div style="position:absolute;left:650.5px;top:757px;font-size:14px;line-height:16px;color:#333;font-weight:normal;white-space:nowrap;letter-spacing:0.26px">20000</div><div style="position:absolute;left:733.5px;top:757px;font-size:14px;line-height:16px;color:#4e6628;font-weight:normal;white-space:nowrap;letter-spacing:0px;-webkit-text-stroke:0.2px #4e6628">正常</div><div style="position:absolute;left:815.5px;top:757px;font-size:14px;line-height:16px;color:#333;font-weight:normal;white-space:nowrap;letter-spacing:0.3px">0.00000000</div><div style="position:absolute;left:950.5px;top:757px;font-size:14px;line-height:16px;color:#333;font-weight:normal;white-space:nowrap;letter-spacing:0.3px">0.00000000</div><div style="position:absolute;left:1080.5px;top:757px;font-size:14px;line-height:16px;color:#333;font-weight:normal;white-space:nowrap;letter-spacing:0.3px">0.00000000</div><div style="position:absolute;left:1186.5px;top:757px;font-size:14px;line-height:16px;color:#333;font-weight:normal;white-space:nowrap;letter-spacing:0.26px">12</div><div style="position:absolute;left:1285.5px;top:757px;font-size:14px;line-height:16px;color:#333;font-weight:normal;white-space:nowrap;letter-spacing:0.44px">2021-08-17 19:59</div><div style="position:absolute;left:1438.5px;top:757px;font-size:14px;line-height:16px;color:#333;font-weight:normal;white-space:nowrap;letter-spacing:0.44px">2021-08-17 19:59</div><div style="position:absolute;left:1590.5px;top:757px;font-size:14px;line-height:16px;color:#333;font-weight:normal;white-space:nowrap;letter-spacing:0.44px">2021-08-30 00:00</div><div style="position:absolute;left:1743.5px;top:757px;font-size:14px;line-height:16px;color:#333;font-weight:normal;white-space:nowrap;letter-spacing:0.44px">1970-01-01 08:00</div><div style="position:absolute;left:249px;top:794px;width:18px;height:18px;box-sizing:border-box;border:1px solid #d2d2d2;border-radius:3px;background:#fff"></div><div style="position:absolute;left:291.5px;top:795px;font-size:14px;line-height:16px;color:#333;font-weight:normal;white-space:nowrap;letter-spacing:0.26px">290</div><div style="position:absolute;left:338.5px;top:795px;font-size:14px;line-height:16px;color:#333;font-weight:normal;white-space:nowrap;letter-spacing:0.22px">AI Treasure 60 days</div><div style="position:absolute;left:503.5px;top:795px;font-size:14px;line-height:16px;color:#333;font-weight:normal;white-space:nowrap;letter-spacing:0.3px">AB#6CI8BDL53</div><div style="position:absolute;left:650.5px;top:795px;font-size:14px;line-height:16px;color:#333;font-weight:normal;white-space:nowrap;letter-spacing:0.26px">20000</div><div style="position:absolute;left:733.5px;top:795px;font-size:14px;line-height:16px;color:#4e6628;font-weight:normal;white-space:nowrap;letter-spacing:0px;-webkit-text-stroke:0.2px #4e6628">正常</div><div style="position:absolute;left:815.5px;top:795px;font-size:14px;line-height:16px;color:#333;font-weight:normal;white-space:nowrap;letter-spacing:0.3px">0.00000000</div><div style="position:absolute;left:950.5px;top:795px;font-size:14px;line-height:16px;color:#333;font-weight:normal;white-space:nowrap;letter-spacing:0.3px">0.00000000</div><div style="position:absolute;left:1080.5px;top:795px;font-size:14px;line-height:16px;color:#333;font-weight:normal;white-space:nowrap;letter-spacing:0.3px">0.00000000</div><div style="position:absolute;left:1186.5px;top:795px;font-size:14px;line-height:16px;color:#333;font-weight:normal;white-space:nowrap;letter-spacing:0.26px">12</div><div style="position:absolute;left:1285.5px;top:795px;font-size:14px;line-height:16px;color:#333;font-weight:normal;white-space:nowrap;letter-spacing:0.44px">2021-08-17 19:59</div><div style="position:absolute;left:1438.5px;top:795px;font-size:14px;line-height:16px;color:#333;font-weight:normal;white-space:nowrap;letter-spacing:0.44px">2021-08-17 19:59</div><div style="position:absolute;left:1590.5px;top:795px;font-size:14px;line-height:16px;color:#333;font-weight:normal;white-space:nowrap;letter-spacing:0.44px">2021-08-30 00:00</div><div style="position:absolute;left:1743.5px;top:795px;font-size:14px;line-height:16px;color:#333;font-weight:normal;white-space:nowrap;letter-spacing:0.44px">1970-01-01 08:00</div><div style="position:absolute;left:249px;top:832px;width:18px;height:18px;box-sizing:border-box;border:1px solid #d2d2d2;border-radius:3px;background:#fff"></div><div style="position:absolute;left:291.5px;top:833px;font-size:14px;line-height:16px;color:#333;font-weight:normal;white-space:nowrap;letter-spacing:0.26px">289</div><div style="position:absolute;left:338.5px;top:833px;font-size:14px;line-height:16px;color:#333;font-weight:normal;white-space:nowrap;letter-spacing:0.22px">AI Treasure 60 days</div><div style="position:absolute;left:503.5px;top:833px;font-size:14px;line-height:16px;color:#333;font-weight:normal;white-space:nowrap;letter-spacing:0.3px">AB#RBP0059V9</div><div style="position:absolute;left:650.5px;top:833px;font-size:14px;line-height:16px;color:#333;font-weight:normal;white-space:nowrap;letter-spacing:0.26px">50000</div><div style="position:absolute;left:733.5px;top:833px;font-size:14px;line-height:16px;color:#4e6628;font-weight:normal;white-space:nowrap;letter-spacing:0px;-webkit-text-stroke:0.2px #4e6628">正常</div><div style="position:absolute;left:815.5px;top:833px;font-size:14px;line-height:16px;color:#333;font-weight:normal;white-space:nowrap;letter-spacing:0.3px">0.00000000</div><div style="position:absolute;left:950.5px;top:833px;font-size:14px;line-height:16px;color:#333;font-weight:normal;white-space:nowrap;letter-spacing:0.3px">0.00000000</div><div style="position:absolute;left:1080.5px;top:833px;font-size:14px;line-height:16px;color:#333;font-weight:normal;white-space:nowrap;letter-spacing:0.3px">0.00000000</div><div style="position:absolute;left:1186.5px;top:833px;font-size:14px;line-height:16px;color:#333;font-weight:normal;white-space:nowrap;letter-spacing:0.26px">12</div><div style="position:absolute;left:1285.5px;top:833px;font-size:14px;line-height:16px;color:#333;font-weight:normal;white-space:nowrap;letter-spacing:0.44px">2021-08-17 19:57</div><div style="position:absolute;left:1438.5px;top:833px;font-size:14px;line-height:16px;color:#333;font-weight:normal;white-space:nowrap;letter-spacing:0.44px">2021-08-17 19:57</div><div style="position:absolute;left:1590.5px;top:833px;font-size:14px;line-height:16px;color:#333;font-weight:normal;white-space:nowrap;letter-spacing:0.44px">2021-08-30 00:00</div><div style="position:absolute;left:1743.5px;top:833px;font-size:14px;line-height:16px;color:#333;font-weight:normal;white-space:nowrap;letter-spacing:0.44px">1970-01-01 08:00</div><div style="position:absolute;left:249px;top:871px;width:18px;height:18px;box-sizing:border-box;border:1px solid #d2d2d2;border-radius:3px;background:#fff"></div><div style="position:absolute;left:291.5px;top:872px;font-size:14px;line-height:16px;color:#333;font-weight:normal;white-space:nowrap;letter-spacing:0.26px">288</div><div style="position:absolute;left:338.5px;top:872px;font-size:14px;line-height:16px;color:#333;font-weight:normal;white-space:nowrap;letter-spacing:0.22px">AI Treasure 60 days</div><div style="position:absolute;left:503.5px;top:872px;font-size:14px;line-height:16px;color:#333;font-weight:normal;white-space:nowrap;letter-spacing:0.3px">AB#RBP0059V9</div><div style="position:absolute;left:650.5px;top:872px;font-size:14px;line-height:16px;color:#333;font-weight:normal;white-space:nowrap;letter-spacing:0.26px">20000</div><div style="position:absolute;left:733.5px;top:872px;font-size:14px;line-height:16px;color:#4e6628;font-weight:normal;white-space:nowrap;letter-spacing:0px;-webkit-text-stroke:0.2px #4e6628">正常</div><div style="position:absolute;left:815.5px;top:872px;font-size:14px;line-height:16px;color:#333;font-weight:normal;white-space:nowrap;letter-spacing:0.3px">0.00000000</div><div style="position:absolute;left:950.5px;top:872px;font-size:14px;line-height:16px;color:#333;font-weight:normal;white-space:nowrap;letter-spacing:0.3px">0.00000000</div><div style="position:absolute;left:1080.5px;top:872px;font-size:14px;line-height:16px;color:#333;font-weight:normal;white-space:nowrap;letter-spacing:0.3px">0.00000000</div><div style="position:absolute;left:1186.5px;top:872px;font-size:14px;line-height:16px;color:#333;font-weight:normal;white-space:nowrap;letter-spacing:0.26px">12</div><div style="position:absolute;left:1285.5px;top:872px;font-size:14px;line-height:16px;color:#333;font-weight:normal;white-space:nowrap;letter-spacing:0.44px">2021-08-17 19:56</div><div style="position:absolute;left:1438.5px;top:872px;font-size:14px;line-height:16px;color:#333;font-weight:normal;white-space:nowrap;letter-spacing:0.44px">2021-08-17 19:56</div><div style="position:absolute;left:1590.5px;top:872px;font-size:14px;line-height:16px;color:#333;font-weight:normal;white-space:nowrap;letter-spacing:0.44px">2021-08-30 00:00</div><div style="position:absolute;left:1743.5px;top:872px;font-size:14px;line-height:16px;color:#333;font-weight:normal;white-space:nowrap;letter-spacing:0.44px">1970-01-01 08:00</div><div style="position:absolute;left:249px;top:909px;width:18px;height:18px;box-sizing:border-box;border:1px solid #d2d2d2;border-radius:3px;background:#fff"></div><div style="position:absolute;left:291.5px;top:910px;font-size:14px;line-height:16px;color:#333;font-weight:normal;white-space:nowrap;letter-spacing:0.26px">287</div><div style="position:absolute;left:338.5px;top:910px;font-size:14px;line-height:16px;color:#333;font-weight:normal;white-space:nowrap;letter-spacing:0.22px">AI Treasure 60 days</div><div style="position:absolute;left:503.5px;top:910px;font-size:14px;line-height:16px;color:#333;font-weight:normal;white-space:nowrap;letter-spacing:0.3px">AB#98NU8BL07</div><div style="position:absolute;left:650.5px;top:910px;font-size:14px;line-height:16px;color:#333;font-weight:normal;white-space:nowrap;letter-spacing:0.26px">40000</div><div style="position:absolute;left:733.5px;top:910px;font-size:14px;line-height:16px;color:#4e6628;font-weight:normal;white-space:nowrap;letter-spacing:0px;-webkit-text-stroke:0.2px #4e6628">正常</div><div style="position:absolute;left:815.5px;top:910px;font-size:14px;line-height:16px;color:#333;font-weight:normal;white-space:nowrap;letter-spacing:0.3px">0.00000000</div><div style="position:absolute;left:950.5px;top:910px;font-size:14px;line-height:16px;color:#333;font-weight:normal;white-space:nowrap;letter-spacing:0.3px">0.00000000</div><div style="position:absolute;left:1080.5px;top:910px;font-size:14px;line-height:16px;color:#333;font-weight:normal;white-space:nowrap;letter-spacing:0.3px">0.00000000</div><div style="position:absolute;left:1186.5px;top:910px;font-size:14px;line-height:16px;color:#333;font-weight:normal;white-space:nowrap;letter-spacing:0.26px">12</div><div style="position:absolute;left:1285.5px;top:910px;font-size:14px;line-height:16px;color:#333;font-weight:normal;white-space:nowrap;letter-spacing:0.44px">2021-08-17 18:40</div><div style="position:absolute;left:1438.5px;top:910px;font-size:14px;line-height:16px;color:#333;font-weight:normal;white-space:nowrap;letter-spacing:0.44px">2021-08-17 18:40</div><div style="position:absolute;left:1590.5px;top:910px;font-size:14px;line-height:16px;color:#333;font-weight:normal;white-space:nowrap;letter-spacing:0.44px">2021-08-30 00:00</div><div style="position:absolute;left:1743.5px;top:910px;font-size:14px;line-height:16px;color:#333;font-weight:normal;white-space:nowrap;letter-spacing:0.44px">1970-01-01 08:00</div></div><div style="position:absolute;left:220px;top:916px;width:1683px;height:21px;background:#f7f7f7;"></div><div style="position:absolute;left:220px;top:916px;width:1683px;height:1px;background:#ececec;"></div><div style="position:absolute;left:226px;top:922px;font-size:12px;line-height:14px;color:#999;font-weight:normal;white-space:nowrap;letter-spacing:0.3px">后台管理系统 版权所有 © 2018-2022</div><div style="position:absolute;right:8px;top:922px;font-size:12px;line-height:14px;color:#999;white-space:nowrap;letter-spacing:0.15px">Powered By 后台管理系统</div>
</div>
</body></html>
